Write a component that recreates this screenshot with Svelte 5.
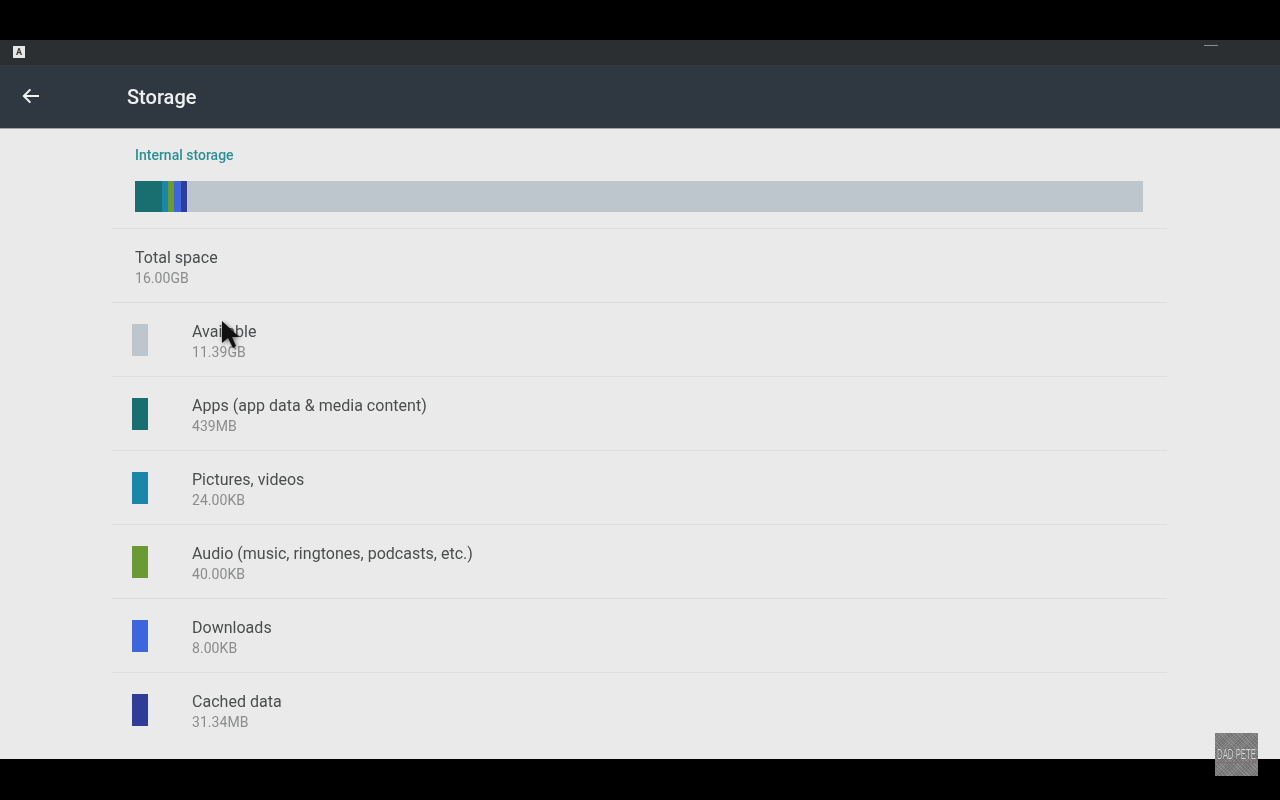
<script>
  const rows = [
    { title: 'Available', value: '11.39GB', color: '#bcc6cc' },
    { title: 'Apps (app data & media content)', value: '439MB', color: '#196e70' },
    { title: 'Pictures, videos', value: '24.00KB', color: '#1a86a8' },
    { title: 'Audio (music, ringtones, podcasts, etc.)', value: '40.00KB', color: '#6b9a34' },
    { title: 'Downloads', value: '8.00KB', color: '#3e66dc' },
    { title: 'Cached data', value: '31.34MB', color: '#2f3d98' }
  ];
  const segments = [
    { color: '#196e70', w: 27 },
    { color: '#1a86a8', w: 6 },
    { color: '#6b9a34', w: 6 },
    { color: '#3e66dc', w: 7 },
    { color: '#2f3d98', w: 6 }
  ];
</script>

<div class="screen">
  <div class="status">
    <div class="notif">A</div>
    <div class="dash"></div>
  </div>
  <header class="toolbar">
    <svg class="back" viewBox="0 0 18 16" width="18" height="16" aria-hidden="true">
      <path d="M17 8H2M8.4 1.4 1.8 8l6.6 6.6" fill="none" stroke="#f1f3f3" stroke-width="2" />
    </svg>
    <h1>Storage</h1>
  </header>
  <main class="content">
    <div class="list">
      <div class="section">Internal storage</div>
      <div class="bar">
        {#each segments as s}
          <span style="width:{s.w}px;background:{s.color}"></span>
        {/each}
      </div>
      <div class="total">
        <div class="title">Total space</div>
        <div class="value">16.00GB</div>
      </div>
      {#each rows as r}
        <div class="row">
          <span class="swatch" style="background:{r.color}"></span>
          <div>
            <div class="title">{r.title}</div>
            <div class="value">{r.value}</div>
          </div>
        </div>
      {/each}
    </div>
  </main>
  <svg class="cursor" viewBox="0 0 20 30" width="20" height="30" aria-hidden="true">
    <path d="M1 1v22l6-5 5 10 3-2-4-9h7z" fill="#111" />
  </svg>
  <div class="mark"><span>DAD PETE</span></div>
</div>

<style>
  :global(body) { margin: 0; background: #000; }
  .screen {
    position: relative;
    width: 1280px;
    height: 800px;
    padding: 40px 0 41px;
    box-sizing: border-box;
    background: #000;
    overflow: hidden;
    display: flex;
    flex-direction: column;
    font-family: Roboto, "Liberation Sans", sans-serif;
  }
  .status {
    height: 25px;
    flex: none;
    background: #2b2f31;
    display: flex;
    align-items: flex-start;
    justify-content: space-between;
    padding: 6px 62px 0 13px;
    box-sizing: border-box;
  }
  .notif {
    width: 12px;
    height: 12px;
    background: #e6e6e6;
    color: #3a3a3a;
    font-size: 9px;
    font-weight: 700;
    line-height: 12px;
    text-align: center;
    filter: blur(0.4px);
  }
  .dash {
    width: 14px;
    height: 1px;
    margin-top: -1px;
    background: #8a8e90;
    filter: blur(0.5px);
  }
  .toolbar {
    height: 64px;
    flex: none;
    background: #2f3840;
    border-bottom: 1px solid #a0a4a4;
    box-sizing: border-box;
    display: flex;
    align-items: center;
    padding: 0 0 0 22px;
  }
  .back { flex: none; margin-bottom: 2px; filter: blur(0.3px); }
  h1 {
    margin: 1px 0 0 87px;
    font-size: 20px;
    font-weight: 500;
    color: #eef0f0;
    filter: blur(0.35px);
  }
  .content {
    flex: 1;
    background: #eaeaea;
    min-height: 0;
  }
  .list {
    width: 1055px;
    margin-left: 112px;
  }
  .section {
    padding: 18px 0 0 23px;
    height: 33px;
    box-sizing: border-box;
    font-size: 14px;
    line-height: 16px;
    font-weight: 500;
    color: #2c8f93;
    filter: blur(0.35px);
  }
  .bar {
    display: flex;
    width: 1008px;
    height: 31px;
    margin: 19px 0 16px 23px;
    background: #bdc6cd;
    filter: blur(0.4px);
  }
  .bar span { display: block; height: 100%; }
  .total, .row {
    height: 74px;
    box-sizing: border-box;
    border-top: 1px solid #dedede;
  }
  .total { padding: 19px 0 0 23px; }
  .row {
    display: flex;
    padding: 19px 0 0 20px;
  }
  .swatch {
    width: 16px;
    height: 32px;
    margin: 2px 44px 0 0;
    flex: none;
    filter: blur(0.4px);
  }
  .title {
    font-size: 16px;
    line-height: 20px;
    letter-spacing: 0.02px;
    color: #4a4d4e;
    filter: blur(0.35px);
  }
  .value {
    font-size: 14px;
    line-height: 20px;
    letter-spacing: 0.06px;
    color: #8a8c8d;
    filter: blur(0.35px);
  }
  .cursor {
    position: absolute;
    left: 221px;
    top: 320px;
    filter: blur(0.5px) drop-shadow(1px 1px 2px rgba(0, 0, 0, 0.55));
  }
  .mark {
    position: absolute;
    left: 1215px;
    top: 733px;
    width: 43px;
    height: 43px;
    background:
      repeating-linear-gradient(45deg, rgba(255, 255, 255, 0.12) 0 1px, transparent 1px 3px),
      repeating-linear-gradient(-45deg, rgba(0, 0, 0, 0.14) 0 1px, transparent 1px 2px),
      #828282;
    display: flex;
    align-items: center;
    justify-content: center;
    overflow: hidden;
  }
  .mark span {
    flex: none;
    padding-bottom: 1px;
    border-bottom: 1px solid #8a6a6e;
    color: #d8d8d8;
    font-family: "Liberation Sans", sans-serif;
    font-size: 15px;
    line-height: 14px;
    white-space: nowrap;
    text-shadow: 0 0 1px #333;
    transform: scaleX(0.52);
  }
</style>
